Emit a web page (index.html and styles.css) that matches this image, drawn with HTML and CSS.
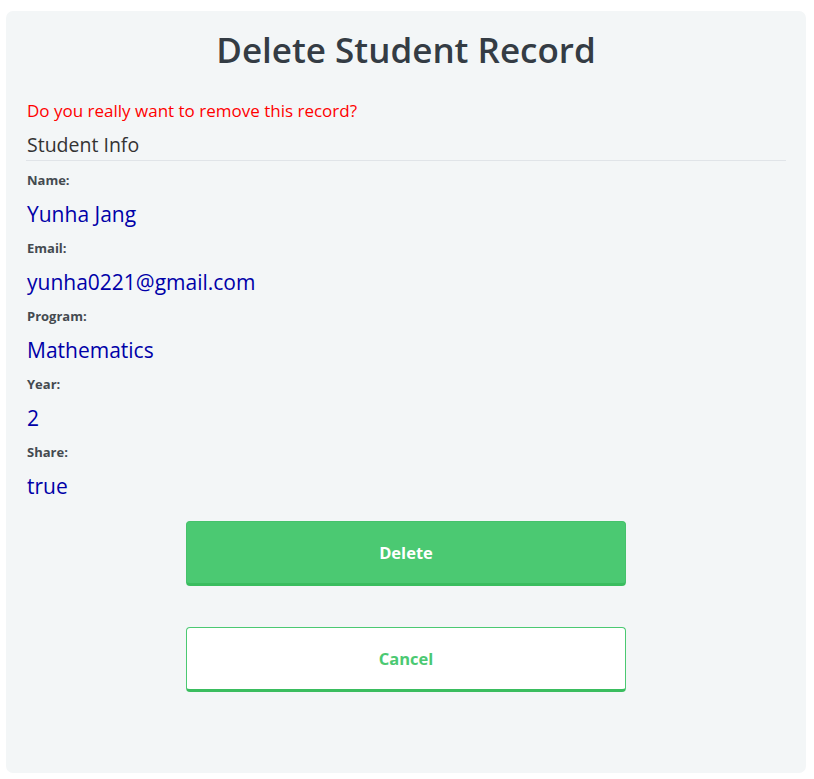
FILE: index.html
```
<!DOCTYPE html>
<html>
<head>
<meta charset="utf-8">
<link rel="stylesheet" href="styles.css">
</head>
<body>
<div class="card">
  <h1 class="title">Delete Student Record</h1>
  <p class="warn">Do you really want to remove this record?</p>
  <h2 class="section">Student Info</h2>
  <dl class="info">
    <dt>Name:</dt><dd>Yunha Jang</dd>
    <dt>Email:</dt><dd>yunha0221@gmail.com</dd>
    <dt>Program:</dt><dd>Mathematics</dd>
    <dt>Year:</dt><dd>2</dd>
    <dt>Share:</dt><dd>true</dd>
  </dl>
  <div class="actions">
    <button class="btn btn-delete">Delete</button>
    <button class="btn btn-cancel">Cancel</button>
  </div>
</div>
</body>
</html>
```
FILE: styles.css
```
html, body { margin: 0; padding: 0; background: #ffffff; }
body { padding: 11px 8px 6px 6px; font-family: "Open Sans", Lato, sans-serif; }
.card {
  width: 800px;
  height: 762px;
  box-sizing: border-box;
  background: #f3f6f7;
  border-radius: 7px;
  padding: 17px 20px 0 20px;
}
.title {
  margin: 0;
  text-align: center;
  font-size: 35px;
  font-weight: 600;
  color: #343c44;
  line-height: 44px;
}
.warn {
  margin: 29px 0 0 1px;
  color: #ff0000;
  font-size: 17px;
  line-height: 20px;
}
.section {
  margin: 12px 0 0;
  padding-left: 1px;
  font-size: 19.5px;
  font-weight: 500;
  color: #333333;
  line-height: 24px;
  padding-bottom: 3px;
  border-bottom: 1px solid #e0e4e8;
}
.info { margin: 10px 0 0 1px; }
.info dt {
  font-size: 13px;
  font-weight: 700;
  color: #444a50;
  line-height: 18px;
}
.info dd {
  margin: 0;
  font-size: 21px;
  color: #0000a8;
  line-height: 26px;
  padding: 12px 0 12px;
}
.actions {
  display: flex;
  flex-direction: column;
  align-items: center;
  gap: 41px;
  margin-top: 10px;
}
.btn {
  width: 440px;
  height: 65px;
  border-radius: 4px;
  font-family: "Open Sans", Lato, sans-serif;
  font-size: 16.5px;
  font-weight: 700;
  cursor: pointer;
}
.btn-delete {
  background: #4bc972;
  color: #ffffff;
  border: 1px solid #45c26b;
  border-bottom: 3px solid #3abd5f;
}
.btn-cancel {
  background: #ffffff;
  color: #4bc972;
  border: 1px solid #4bc972;
  border-bottom: 3px solid #3abd5f;
}
```
